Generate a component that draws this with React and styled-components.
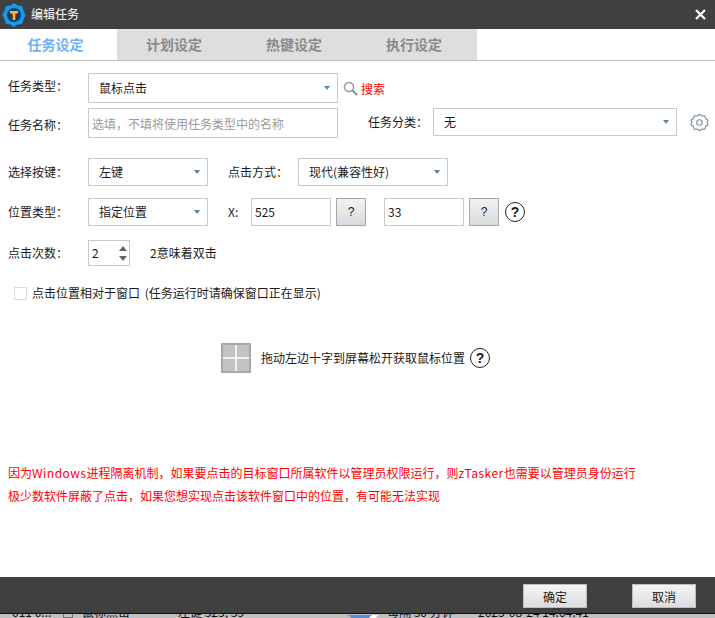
import React from 'react';
import styled, { createGlobalStyle } from 'styled-components';

const FONT = '"Noto Sans CJK SC", "Liberation Sans", sans-serif';

const GlobalStyle = createGlobalStyle`
  html, body {
    margin: 0;
    padding: 0;
    width: 715px;
    height: 618px;
    overflow: hidden;
    background: #fff;
  }
  body {
    font-family: ${FONT};
    font-size: 12px;
    color: #1a1a1a;
  }
`;

const Page = styled.div`
  display: flex;
  flex-direction: column;
  width: 715px;
  height: 618px;
  overflow: hidden;
`;

const TitleBar = styled.div`
  display: flex;
  align-items: center;
  flex: none;
  height: 29px;
  padding: 0 9px 0 2px;
  background: #404040;
  color: #fff;
`;

const TitleText = styled.span`
  margin-left: 5px;
  margin-bottom: 3px;
  font-size: 12px;
`;

const CloseButton = styled.div`
  display: flex;
  margin-left: auto;
`;

const Tabs = styled.div`
  display: flex;
  flex: none;
  height: 31px;
  border-bottom: 1px solid #c4c4c4;
`;

const Tab = styled.div`
  display: flex;
  align-items: center;
  justify-content: center;
  box-sizing: border-box;
  width: ${(p) => (p.$active ? 117 : 120)}px;
  padding: 0 6px 2px 0;
  background: ${(p) => (p.$active ? '#fff' : '#dedede')};
  color: ${(p) => (p.$active ? '#6cb2f5' : '#8a8a8a')};
  font-size: 14px;
  font-weight: 700;
`;

const Body = styled.div`
  display: flex;
  flex-direction: column;
  flex: 1;
  padding: 12px 0 0 8px;
`;

const Row = styled.div`
  display: flex;
  align-items: ${(p) => p.$align || 'center'};
  height: ${(p) => p.$h || 28}px;
  margin-top: ${(p) => p.$top || 0}px;
`;

const Label = styled.span`
  flex: none;
  width: ${(p) => p.$w || 80}px;
  margin-left: ${(p) => p.$left || 0}px;
  margin-top: ${(p) => p.$down || 0}px;
  margin-bottom: ${(p) => (p.$lift ?? 1) * 2}px;
`;

const FieldText = styled.span`
  margin-bottom: ${(p) => (p.$lift ?? 1) * 2}px;
`;

const Field = styled.div`
  display: flex;
  align-items: center;
  box-sizing: border-box;
  flex: none;
  width: ${(p) => p.$w}px;
  height: ${(p) => p.$h || 28}px;
  margin-left: ${(p) => p.$left || 0}px;
  padding-left: ${(p) => p.$pad || 10}px;
  padding-right: 7px;
  border: 1px solid #c8c8c8;
  background: #fff;
  color: ${(p) => (p.$hint ? '#9a9a9a' : '#1a1a1a')};
  font-size: 12px;
`;

const Caret = styled.i`
  width: 0;
  height: 0;
  margin-left: auto;
  border-left: 3.5px solid transparent;
  border-right: 3.5px solid transparent;
  border-top: 4px solid #5b86a8;
`;

const AskButton = styled.div`
  display: flex;
  align-items: center;
  justify-content: center;
  box-sizing: border-box;
  flex: none;
  width: 30px;
  height: 28px;
  margin-left: 5px;
  border: 1px solid #a8a8a8;
  background: linear-gradient(#f2f2f2, #d9dadc);
  font-family: "Liberation Sans", sans-serif;
`;

const HelpMark = styled.div`
  display: flex;
  align-items: center;
  justify-content: center;
  box-sizing: border-box;
  flex: none;
  width: 20px;
  height: 20px;
  margin-left: ${(p) => p.$left || 6}px;
  border: 1.5px solid #222;
  border-radius: 50%;
  font-family: "Liberation Sans", sans-serif;
  font-size: 14px;
  font-weight: 700;
`;

const IconSlot = styled.div`
  display: flex;
  flex: none;
  margin-left: ${(p) => p.$left}px;
  margin-top: ${(p) => p.$top || 0}px;
`;

const SearchLink = styled.span`
  margin-left: 3px;
  color: #f00;
`;

const Spinner = styled.div`
  display: flex;
  flex-direction: column;
  gap: 5px;
  margin-left: auto;
  margin-right: -5px;
`;

const Arrow = styled.i`
  width: 0;
  height: 0;
  border-left: 4px solid transparent;
  border-right: 4px solid transparent;
  border-${(p) => (p.$up ? 'bottom' : 'top')}: 5px solid #666;
`;

const Hint = styled.span`
  margin-left: ${(p) => p.$left}px;
  margin-bottom: 2px;
  word-spacing: ${(p) => p.$words || 0}px;
`;

const Check = styled.div`
  flex: none;
  box-sizing: border-box;
  width: 13px;
  height: 13px;
  margin-left: 6px;
  border: 1px solid #d3dde3;
`;

const DragRow = styled.div`
  display: flex;
  align-items: center;
  height: 30px;
  margin: 43px 0 0 213px;
`;

const CrossBox = styled.div`
  flex: none;
  margin-right: 10px;
  line-height: 0;
`;

const Notes = styled.div`
  margin-top: 88px;
  color: #f00;
  line-height: 23px;
`;

const Latin = styled.span`
  letter-spacing: 0.5px;
`;

const Footer = styled.div`
  display: flex;
  align-items: center;
  justify-content: flex-end;
  flex: none;
  gap: 45px;
  box-sizing: border-box;
  height: 36px;
  padding: 2px 19px 0 0;
  background: #404040;
`;

const FooterButton = styled.div`
  display: flex;
  align-items: center;
  justify-content: center;
  box-sizing: border-box;
  width: 64px;
  height: 24px;
  border: 1px solid #bdbdbd;
  background: linear-gradient(#f4f4f4, #dcdde0);
`;

const BehindWindow = styled.div`
  display: flex;
  align-items: flex-start;
  flex: none;
  height: 5px;
  overflow: hidden;
  border-top: 1px solid #111;
  box-sizing: border-box;
  padding-left: 12px;
  background: #c0c0c0;
`;

const BehindText = styled.span`
  flex: none;
  width: ${(p) => p.$w}px;
  margin-top: -8px;
  line-height: 12px;
  white-space: nowrap;
  overflow: hidden;
  color: #111;
`;

const RowMark = styled.i`
  flex: none;
  box-sizing: border-box;
  width: 10px;
  height: 4px;
  margin-right: 9px;
  border: 1px solid #777;
  border-top: 0;
`;

const StatusMark = styled.div`
  flex: none;
  width: 39px;
  line-height: 0;
`;

const Logo = () => (
  <svg width="24" height="26" viewBox="0 0 24 26">
    <path d="M12 1l3.500 2.500 4.500.5 1.500 4.500L23.500 13l-2 4.500L20 22l-4.500.5L12 25l-3.500-2.500L4 22l-1.500-4.500L.5 13l2-4.500L4 4l4.500-.5z" fill="#0f9cf0" />
    <circle cx="12" cy="13" r="7" fill="#1f3a52" />
    <path d="M8 9h8v2.500h-2.700V18h-2.600v-6.500H8z" fill="#f6b73c" />
  </svg>
);

const SearchIcon = () => (
  <svg width="15" height="15" viewBox="0 0 15 15" fill="none">
    <circle cx="6" cy="6" r="4.600" stroke="#8f9aa0" strokeWidth="1.500" />
    <path d="M9.500 9.500l4.500 4.500" stroke="#8f9aa0" strokeWidth="2.400" />
  </svg>
);

const GearIcon = () => (
  <svg width="19" height="19" viewBox="0 0 24 24" fill="none" stroke="#7c8ca3" strokeWidth="1.400">
    <path d="M12 1.500l3 2.200 3.700-.2 1.100 3.500 3 2.200-1.200 2.800 1.200 2.800-3 2.200-1.100 3.500-3.700-.2-3 2.200-3-2.200-3.700.2-1.100-3.500-3-2.200L2.400 12 1.200 9.200l3-2.200 1.100-3.500 3.700.2z" />
    <circle cx="12" cy="12" r="3.500" />
  </svg>
);

const CloseIcon = () => (
  <svg width="11" height="11" viewBox="0 0 11 11">
    <path d="M1 1l9 9M10 1l-9 9" stroke="#fff" strokeWidth="2.200" />
  </svg>
);

const CrossIcon = () => (
  <svg width="30" height="30" viewBox="0 0 30 30">
    <rect width="30" height="30" fill="#a9a9a9" />
    <rect x="2" y="2" width="26" height="26" fill="#c2c2c2" />
    <path d="M15 2v26M2 15h26" stroke="#fff" strokeWidth="1.500" />
  </svg>
);

const StatusIcon = () => (
  <svg width="30" height="4" viewBox="0 0 30 4">
    <path d="M0 0h24l-4 4H5z" fill="#4a90e8" />
    <path d="M24 0h6l-3 4h-7z" fill="#fff" />
  </svg>
);

const App = () => (
  <Page>
    <GlobalStyle />
    <TitleBar>
      <Logo />
      <TitleText>编辑任务</TitleText>
      <CloseButton><CloseIcon /></CloseButton>
    </TitleBar>
    <Tabs>
      <Tab $active>任务设定</Tab>
      <Tab>计划设定</Tab>
      <Tab>热键设定</Tab>
      <Tab>执行设定</Tab>
    </Tabs>
    <Body>
      <Row $h={30}>
        <Label $lift={3}>任务类型：</Label>
        <Field $w={250} $h={30}><FieldText>鼠标点击</FieldText><Caret /></Field>
        <IconSlot $left={5}><SearchIcon /></IconSlot>
        <SearchLink>搜索</SearchLink>
      </Row>
      <Row $h={30} $top={5} $align="flex-start">
        <Label $down={8} $lift={0}>任务名称：</Label>
        <Field $w={250} $h={30} $pad={3} $hint>选填，不填将使用任务类型中的名称</Field>
        <Label $w={65} $left={30} $down={5} $lift={0}>任务分类：</Label>
        <Field $w={244} $h={28}><FieldText>无</FieldText><Caret /></Field>
        <IconSlot $left={13} $top={5}><GearIcon /></IconSlot>
      </Row>
      <Row $top={20}>
        <Label>选择按键：</Label>
        <Field $w={120}><FieldText>左键</FieldText><Caret /></Field>
        <Label $w={70} $left={20}>点击方式：</Label>
        <Field $w={150}><FieldText>现代(兼容性好)</FieldText><Caret /></Field>
      </Row>
      <Row $top={12}>
        <Label>位置类型：</Label>
        <Field $w={120}><FieldText>指定位置</FieldText><Caret /></Field>
        <Label $w={23} $left={20}>X:</Label>
        <Field $w={80} $pad={3}><FieldText>525</FieldText></Field>
        <AskButton>?</AskButton>
        <Field $w={80} $left={18} $pad={3}><FieldText>33</FieldText></Field>
        <AskButton>?</AskButton>
        <HelpMark>?</HelpMark>
      </Row>
      <Row $h={26} $top={14}>
        <Label>点击次数：</Label>
        <Field $w={42} $h={26} $pad={3}>
          <FieldText>2</FieldText>
          <Spinner><Arrow $up /><Arrow /></Spinner>
        </Field>
        <Hint $left={20}>2意味着双击</Hint>
      </Row>
      <Row $h={14} $top={20}>
        <Check />
        <Hint $left={5} $words={2}>点击位置相对于窗口 (任务运行时请确保窗口正在显示)</Hint>
      </Row>
      <DragRow>
        <CrossBox><CrossIcon /></CrossBox>
        <FieldText>拖动左边十字到屏幕松开获取鼠标位置</FieldText>
        <HelpMark $left={5}>?</HelpMark>
      </DragRow>
      <Notes>
        <div>因为<Latin>Windows</Latin>进程隔离机制，如果要点击的目标窗口所属软件以管理员权限运行，则<Latin>zTasker</Latin>也需要以管理员身份运行</div>
        <div>极少数软件屏蔽了点击，如果您想实现点击该软件窗口中的位置，有可能无法实现</div>
      </Notes>
    </Body>
    <Footer>
      <FooterButton>确定</FooterButton>
      <FooterButton>取消</FooterButton>
    </Footer>
    <BehindWindow>
      <BehindText $w={51}>011 0...</BehindText>
      <RowMark />
      <BehindText $w={96}>鼠标点击</BehindText>
      <BehindText $w={170}>左键 525, 33</BehindText>
      <StatusMark><StatusIcon /></StatusMark>
      <BehindText $w={91}>每隔 30 分钟</BehindText>
      <BehindText $w={116}>2025-08-24 14:04:41</BehindText>
    </BehindWindow>
  </Page>
);

export default App;
